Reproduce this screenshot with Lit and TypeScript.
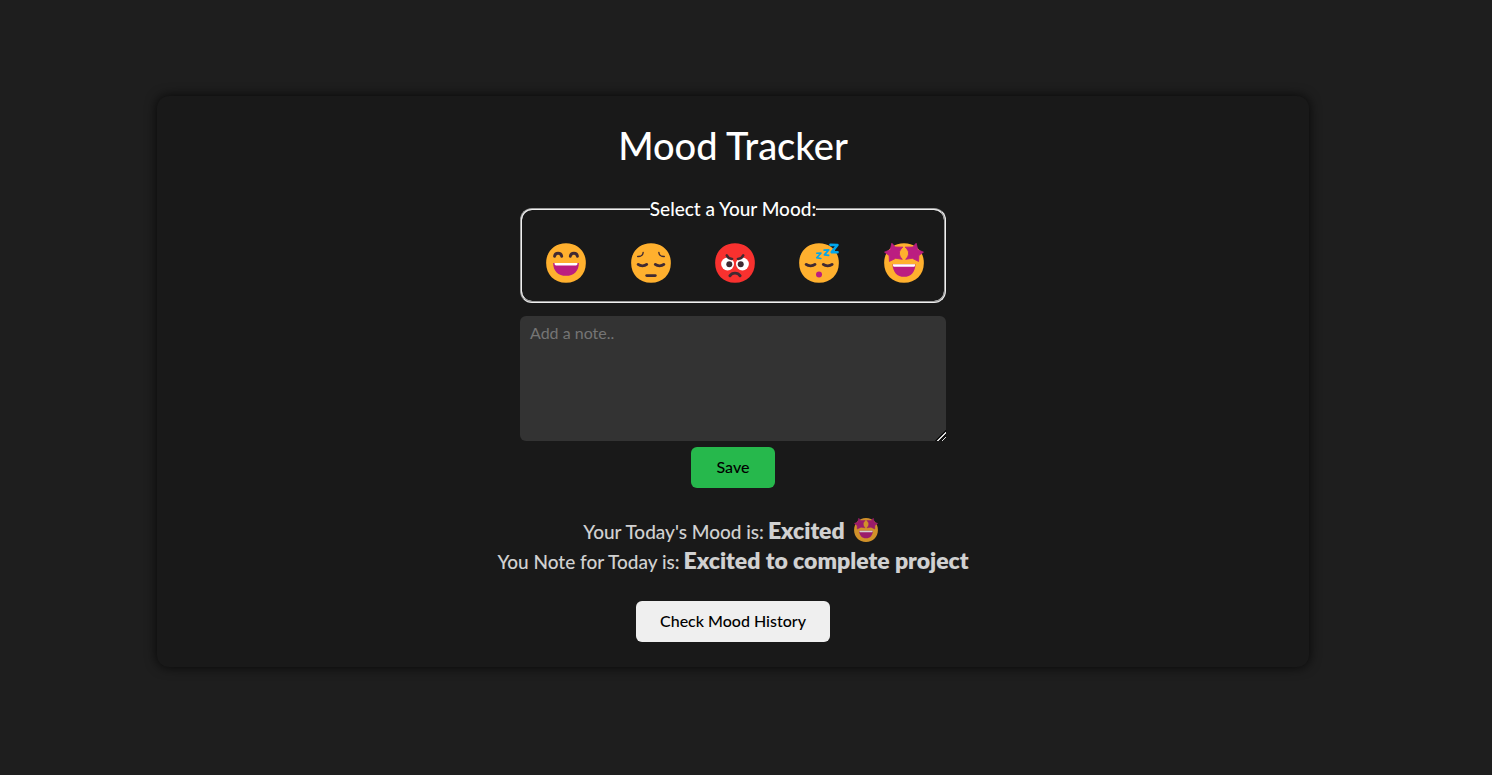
import { LitElement, html, svg, css, type SVGTemplateResult } from "lit";
import { customElement, property, state } from "lit/decorators.js";

const FACE =
  "M16 29.9C24.3 29.9 29.9 24 29.9 16C29.9 8 24.3 2.1 16 2.1C7.7 2.1 2.1 8 2.1 16C2.1 24 7.7 29.9 16 29.9Z";

const STAR = "M7.5 2.2L9.9 4.8L15.2 4.9C13.6 6.2 12.8 7.6 12.8 9C12.8 10.6 13.4 12 14.8 13.4L10.2 12.7L5.8 14.9L5.6 10.8L2.4 8.4L6.4 6.7Z";

const faces: Record<string, SVGTemplateResult> = {
  Happy: svg`
    <path d=${FACE} fill="#ffb02e" />
    <g fill="none" stroke="#402a32" stroke-width="2" stroke-linecap="round">
      <path d="M8 11.3C8.4 8.5 12.5 8.5 13 11.3" />
      <path d="M19 11.3C19.5 8.5 23.6 8.5 24 11.3" />
    </g>
    <path d="M7 16H25C25 21.6 21.5 25 16 25S7 21.6 7 16Z" fill="#bb1d80" />
    <path d="M8 16H24V16.7C24 17.2 23.5 17.7 23 17.7H9C8.5 17.7 8 17.2 8 16.7Z" fill="#fff" />`,
  Sad: svg`
    <path d=${FACE} fill="#ffb02e" />
    <g fill="none" stroke="#402a32" stroke-linecap="round">
      <path d="M6.7 11.5C8.8 11.6 10.4 10.4 10.5 8.6" />
      <path d="M25.3 11.5C23.2 11.6 21.6 10.4 21.5 8.6" />
      <path d="M7 17C8.6 18.3 11.4 18.3 13 17" stroke-width="2" />
      <path d="M19 17C20.6 18.3 23.4 18.3 25 17" stroke-width="2" />
      <path d="M13 24.8H19" stroke-width="2" />
    </g>`,
  Angry: svg`
    <path d=${FACE} fill="#f8312f" />
    <circle cx="10.8" cy="16.7" r="4.5" fill="#fff" />
    <circle cx="21.2" cy="16.7" r="4.5" fill="#fff" />
    <circle cx="12" cy="16.9" r="2.1" fill="#402a32" />
    <circle cx="20" cy="16.9" r="2.1" fill="#402a32" />
    <path d="M9.2 11L14 14.4V10.5H9ZM22.8 11L18 14.4V10.5H23Z" fill="#f8312f" />
    <g fill="none" stroke="#402a32" stroke-width="1.7" stroke-linecap="round">
      <path d="M10.2 10.6C10.8 12.2 12 13 14 13.1" />
      <path d="M21.8 10.6C21.2 12.2 20 13 18 13.1" />
      <path d="M12.4 25C14 22.5 18 22.5 19.6 25" stroke-width="2" />
    </g>`,
  Sleepy: svg`
    <path d=${FACE} fill="#ffb02e" />
    <g fill="none" stroke="#402a32" stroke-width="2" stroke-linecap="round">
      <path d="M7 17C8.6 18.3 11.6 18.3 13.2 17" />
      <path d="M19 17C20.6 18.3 23.6 18.3 25.2 17" />
    </g>
    <circle cx="16" cy="24" r="2.1" fill="#bb1d80" />
    <g fill="none" stroke="#00a6ed" stroke-linecap="round" stroke-linejoin="round">
      <path d="M14.4 9.2L17.4 9.1L14.4 12.3L17.3 12.8" stroke-width="1.1" />
      <path d="M19.6 7L22.8 6.8L19.8 10.3L22.8 10.6" stroke-width="1.2" />
      <path d="M24 3.3L28.9 3.4L24.9 8.4L29 8.5" stroke-width="1.8" />
    </g>`,
  Excited: svg`
    <path d=${FACE} fill="#ffb02e" />
    <g fill="#bb1d80" stroke="#bb1d80" stroke-width="0.6" stroke-linejoin="round">
      <path d=${STAR} />
      <path d=${STAR} transform="matrix(-1 0 0 1 32 0)" />
    </g>
    <path d="M8 16.8H24C24 22 20.8 25.7 16 25.7S8 22 8 16.8Z" fill="#bb1d80" />
    <path d="M8.3 16.8H23.7V17.5C23.7 18.2 23.2 18.7 22.5 18.7H9.5C8.8 18.7 8.3 18.2 8.3 17.5Z" fill="#fff" />`,
};

@customElement("mood-face")
export class MoodFace extends LitElement {
  @property() mood = "Happy";

  static styles = css`
    :host {
      display: block;
      width: 40px;
      height: 40px;
    }
    .face {
      display: block;
      width: 100%;
      height: 100%;
      overflow: visible;
    }
  `;

  render() {
    return html`<svg class="face" viewBox="2 2 28 28" aria-hidden="true">${faces[this.mood]}</svg>`;
  }
}

@customElement("app-root")
export class AppRoot extends LitElement {
  @state() private mood = "Excited";
  @state() private note = "Excited to complete project";

  static styles = css`
    :host {
      box-sizing: border-box;
      display: flex;
      align-items: center;
      justify-content: center;
      min-height: 100vh;
      padding: 0 26px 12px 0;
      background: #1e1e1e;
      color: #fff;
      font-family: Lato, "Open Sans", sans-serif;
    }
    .card {
      box-sizing: border-box;
      display: flex;
      flex-direction: column;
      align-items: center;
      width: 100%;
      max-width: 1152px;
      padding: 23px 24px 25px;
      border-radius: 12px;
      background: #191919;
      box-shadow: 0 0 12px rgba(0, 0, 0, 0.8);
    }
    .title {
      margin: 0 0 26px;
      font-size: 38px;
      line-height: 52px;
      font-weight: 500;
    }
    .form {
      display: flex;
      flex-direction: column;
      align-items: center;
      width: 100%;
      max-width: 426px;
    }
    .moods {
      box-sizing: border-box;
      width: 100%;
      margin: 0 0 13px;
      padding: 22px 0 18px;
      border: 2px groove #f0f0f0;
      border-radius: 12px;
    }
    .legend {
      margin: 0 auto;
      padding: 0;
      font-size: 19px;
      line-height: 24px;
      font-weight: 500;
    }
    .options {
      display: grid;
      grid-template-columns: repeat(5, 1fr);
    }
    .option {
      display: grid;
      place-items: center;
      padding-left: 4px;
      cursor: pointer;
    }
    .radio {
      grid-area: 1 / 1;
      width: 40px;
      height: 40px;
      margin: 0;
      opacity: 0;
    }
    .option mood-face {
      grid-area: 1 / 1;
    }
    .note {
      box-sizing: border-box;
      width: 100%;
      height: 125px;
      margin: 0 0 6px;
      padding: 7px 10px;
      border: 0;
      border-radius: 6px;
      background: #333;
      color: #fff;
      font: inherit;
      font-size: 16px;
      line-height: 20px;
    }
    .note::placeholder {
      color: #757575;
    }
    .note::-webkit-resizer {
      background: linear-gradient(
        135deg,
        transparent 62%,
        #111 62% 67%,
        #ddd 67% 74%,
        #111 74% 84%,
        #ddd 84% 90%,
        transparent 90%
      );
    }
    .button {
      height: 41px;
      padding: 0 24px 2px;
      border: 0;
      border-radius: 6px;
      background: #efefef;
      color: #000;
      font: inherit;
      font-size: 16px;
      font-weight: 500;
      cursor: pointer;
    }
    .save {
      min-width: 84px;
      background: #26b84c;
    }
    .summary {
      margin: 29px 0 24px;
      text-align: center;
      opacity: 0.8;
    }
    .line {
      display: flex;
      align-items: baseline;
      justify-content: center;
      gap: 4px;
      height: 30px;
      margin: 0;
      font-size: 19px;
      line-height: 26px;
      font-weight: 500;
    }
    .value {
      font-size: 23px;
      font-weight: 800;
    }
    .line mood-face {
      align-self: flex-start;
      width: 24px;
      height: 24px;
      margin: 1px 5px 0;
    }
  `;

  private save(e: Event) {
    e.preventDefault();
    const data = new FormData(e.target as HTMLFormElement);
    this.mood = String(data.get("mood") ?? this.mood);
    this.note = String(data.get("note") || this.note);
  }

  render() {
    return html`
      <main class="card">
        <h1 class="title">Mood Tracker</h1>
        <form class="form" @submit=${this.save}>
          <fieldset class="moods">
            <legend class="legend">Select a Your Mood:</legend>
            <div class="options">
              ${Object.keys(faces).map(
                (m) => html`<label class="option">
                  <input class="radio" type="radio" name="mood" value=${m} aria-label=${m} />
                  <mood-face .mood=${m}></mood-face>
                </label>`
              )}
            </div>
          </fieldset>
          <textarea class="note" name="note" aria-label="Note" placeholder="Add a note.."></textarea>
          <button class="button save">Save</button>
        </form>
        <section class="summary">
          <p class="line">
            <span>Your Today's Mood is:</span><strong class="value">${this.mood}</strong>
            <mood-face .mood=${this.mood}></mood-face>
          </p>
          <p class="line"><span>You Note for Today is:</span><strong class="value">${this.note}</strong></p>
        </section>
        <button class="button" type="button">Check Mood History</button>
      </main>
    `;
  }
}
